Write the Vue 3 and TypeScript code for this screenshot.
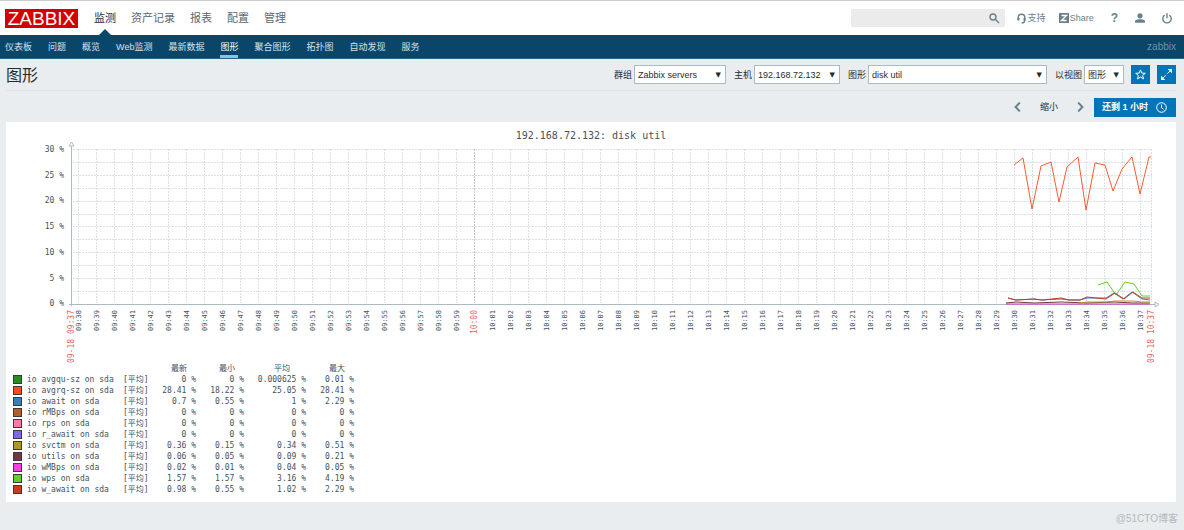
<script setup lang="ts">
interface Series { name: string; color: string; last: string; min: string; avg: string; max: string }
interface Tick { x: number; label: string; major: boolean }

const mainMenu: string[] = ['监测', '资产记录', '报表', '配置', '管理']
const subMenu: string[] = ['仪表板', '问题', '概览', 'Web监测', '最新数据', '图形', '聚合图形', '拓扑图', '自动发现', '服务']

const series: Series[] = [
  { name: 'io avgqu-sz on sda', color: '#2a8a26', last: '0 %', min: '0 %', avg: '0.000625 %', max: '0.01 %' },
  { name: 'io avgrq-sz on sda', color: '#fc4a1a', last: '28.41 %', min: '18.22 %', avg: '25.05 %', max: '28.41 %' },
  { name: 'io await on sda', color: '#3a80b4', last: '0.7 %', min: '0.55 %', avg: '1 %', max: '2.29 %' },
  { name: 'io rMBps on sda', color: '#b0602c', last: '0 %', min: '0 %', avg: '0 %', max: '0 %' },
  { name: 'io rps on sda', color: '#fc7aa8', last: '0 %', min: '0 %', avg: '0 %', max: '0 %' },
  { name: 'io r_await on sda', color: '#7e6ae4', last: '0 %', min: '0 %', avg: '0 %', max: '0 %' },
  { name: 'io svctm on sda', color: '#b49628', last: '0.36 %', min: '0.15 %', avg: '0.34 %', max: '0.51 %' },
  { name: 'io utils on sda', color: '#743440', last: '0.06 %', min: '0.05 %', avg: '0.09 %', max: '0.21 %' },
  { name: 'io wMBps on sda', color: '#f640e0', last: '0.02 %', min: '0.01 %', avg: '0.04 %', max: '0.05 %' },
  { name: 'io wps on sda', color: '#66cc2c', last: '1.57 %', min: '1.57 %', avg: '3.16 %', max: '4.19 %' },
  { name: 'io w_await on sda', color: '#c43e1c', last: '0.98 %', min: '0.55 %', avg: '1.02 %', max: '2.29 %' },
]

const pad = (n: number): string => String(n).padStart(2, '0')
const ticks: Tick[] = Array.from({ length: 60 }, (_, i) => {
  const minute = 9 * 60 + 38 + i
  return { x: 73 + i * 18, label: `${pad(Math.floor(minute / 60))}:${pad(minute % 60)}`, major: minute % 60 === 0 }
})
const rows: number[] = Array.from({ length: 12 }, (_, i) => Math.round(27 + i * 12.9))
const yLabels = [30, 25, 20, 15, 10, 5, 0].map((v, i) => ({ text: `${v} %`, y: Math.round(30 + i * 25.7) }))
</script>

<template>
  <div class="page">
    <header class="top">
      <a class="logo" href="#">ZABBIX</a>
      <nav class="main-menu">
        <a v-for="(m, i) in mainMenu" :key="m" href="#" :class="{ active: i === 0 }">{{ m }}</a>
      </nav>
      <div class="search">
        <input type="text" aria-label="搜索">
        <button type="button" aria-label="搜索">
          <svg width="11" height="11" viewBox="0 0 11 11"><circle cx="4" cy="4" r="3" /><path d="M6.3 6.3 10 10" /></svg>
        </button>
      </div>
      <a class="tool support" href="#">
        <svg width="9" height="11" viewBox="0 0 9 11"><path d="M1.2 7V4.6a3.3 3.3 0 0 1 6.6 0V7c0 1.9-.9 3-3.1 3" /><path d="M1.5 5v2.6M7.5 5v2.6" stroke-width="2" /></svg>支持
      </a>
      <a class="tool share" href="#">
        <svg width="10" height="10" viewBox="0 0 10 10"><path class="solid" d="M0 0h10v10H0z" /><path class="zed" d="M2.5 2.5h5l-5 5h5" /></svg>Share
      </a>
      <a class="tool help" href="#">?</a>
      <a class="tool user" href="#" aria-label="用户">
        <svg width="10" height="10" viewBox="0 0 10 10"><circle class="solid" cx="5" cy="2.8" r="2.6" /><path class="solid" d="M0 9.7V8.3C0 6.8 3 6.3 5 6.3s5 .5 5 2v1.4z" /></svg>
      </a>
      <a class="tool power" href="#" aria-label="退出">
        <svg width="10" height="11" viewBox="0 0 10 11"><path d="M2.7 2.2a4.2 4.2 0 1 0 4.6 0M5 .3v5" /></svg>
      </a>
    </header>

    <nav class="sub-menu">
      <a v-for="m in subMenu" :key="m" href="#" :class="{ selected: m === '图形' }">{{ m }}</a>
      <span class="server">zabbix</span>
    </nav>

    <main>
      <div class="title-row">
        <h1>图形</h1>
        <form class="filters" @submit.prevent>
          <label for="group">群组</label>
          <span class="pick group"><select id="group"><option>Zabbix servers</option></select></span>
          <label for="host">主机</label>
          <span class="pick host"><select id="host"><option>192.168.72.132</option></select></span>
          <label for="graph">图形</label>
          <span class="pick graph"><select id="graph"><option>disk util</option></select></span>
          <label for="view">以视图</label>
          <span class="pick view"><select id="view"><option>图形</option></select></span>
          <button class="square" type="button" aria-label="收藏">
            <svg width="11" height="11" viewBox="0 0 11 11"><path d="m5.5.9 1.3 3.2 3.5.2-2.7 2.2.9 3.4-3-1.9-3 1.9.9-3.4L.7 4.3l3.5-.2z" /></svg>
          </button>
          <button class="square" type="button" aria-label="全屏">
            <svg width="11" height="11" viewBox="0 0 11 11"><path d="m6.3 4.7 3-3M4.7 6.3l-3 3" /><path class="fill" d="M6.7 0H11v4.3zM0 6.7V11h4.3z" /></svg>
          </button>
        </form>
      </div>

      <div class="time-row">
        <button class="arrow" type="button" aria-label="向前"><svg width="7" height="10" viewBox="0 0 7 10"><path d="M5.8.6 1.6 5l4.2 4.4" /></svg></button>
        <button class="zoom" type="button">缩小</button>
        <button class="arrow" type="button" aria-label="向后"><svg width="7" height="10" viewBox="0 0 7 10"><path d="M1.2.6 5.4 5 1.2 9.4" /></svg></button>
        <button class="range" type="button">还剩 1 小时
          <svg width="11" height="11" viewBox="0 0 11 11"><circle cx="5.5" cy="5.5" r="4.8" /><path d="M5.5 2.5v3.2l2 1.6" /></svg>
        </button>
      </div>

      <section class="panel">
        <svg class="chart" viewBox="0 0 1170 241" role="img" aria-label="192.168.72.132: disk util">
          <text class="heading" x="585" y="17" text-anchor="middle">192.168.72.132: disk util</text>
          <g class="grid">
            <path v-for="y in rows" :key="y" :d="`M67 ${y}.5H1146`" />
            <path v-for="t in ticks" :key="t.x" :class="{ major: t.major }" :d="`M${t.x - 1}.5 27V181`" />
            <path d="M1145.5 27V181" />
          </g>
          <g class="axis">
            <path d="M65.5 24V184M63 182.5H1149" />
            <path class="tip" d="m63 24 2.5-4 2.5 4zM1149 180l4 2.5-4 2.5z" />
          </g>
          <text v-for="l in yLabels" :key="l.text" class="value" x="58" :y="l.y" text-anchor="end">{{ l.text }}</text>
          <text
            v-for="t in ticks" :key="t.label" :class="t.major ? 'date' : 'time'"
            :transform="`translate(${t.x + 2} 188) rotate(-90)`" text-anchor="end"
          >{{ t.label }}</text>
          <text class="date" transform="translate(68 188) rotate(-90)" text-anchor="end">09-18 09:37</text>
          <text class="date" transform="translate(1148 188) rotate(-90)" text-anchor="end">09-18 10:37</text>
          <g class="lines">
            <polyline stroke="#fc5a30" points="1008,43 1017,36 1026,87 1035,44 1045,40 1053,80 1061,45 1072,35 1080,88 1089,41 1099,43 1107,69 1116,47 1126,35 1134,72 1143,35 1145,35" />
            <polyline stroke="#743440" points="1000,181 1010,180 1028,181 1055,180 1081,181 1109,180 1127,181 1144,181" />
            <polyline stroke="#b49628" points="1073,181 1081,180 1100,180 1109,179 1127,179 1136,180 1144,180" />
            <polyline stroke="#e030d0" points="1000,182 1144,182" />
            <polyline stroke="#66cc2c" points="1092,163 1101,160 1110,173 1119,160 1128,162 1136,174 1144,174" />
            <polyline stroke="#3a80b4" points="1002,176 1010,178 1028,177 1036,178 1055,177 1063,178 1074,178 1081,176 1100,176 1108,171 1117,177 1126,170 1136,177 1144,178" />
            <polyline stroke="#c43e1c" points="1002,176 1010,178 1028,177 1036,178 1055,176 1063,178 1074,178 1081,175 1100,177 1109,171 1118,177 1127,170 1136,176 1144,176" />
          </g>
        </svg>

        <table class="legend">
          <thead>
            <tr><th class="name"></th><th class="fn"></th><th class="last">最新</th><th class="min">最小</th><th class="avg">平均</th><th class="max">最大</th></tr>
          </thead>
          <tbody>
            <tr v-for="s in series" :key="s.name">
              <td><span class="swatch" :style="{ background: s.color }"></span>{{ s.name }}</td>
              <td>[平均]</td>
              <td class="num">{{ s.last }}</td>
              <td class="num">{{ s.min }}</td>
              <td class="num">{{ s.avg }}</td>
              <td class="num">{{ s.max }}</td>
            </tr>
          </tbody>
        </table>
      </section>
    </main>
    <footer>@51CTO博客</footer>
  </div>
</template>

<style>
html { background: #e9edf0; }
</style>

<style scoped>
* { box-sizing: border-box; }
.page { font: 9px/12px "Liberation Sans", "Noto Sans CJK SC", sans-serif; color: #1f2c33; }
a { text-decoration: none; color: inherit; }
button { font: inherit; border: 0; padding: 0; background: none; color: inherit; cursor: pointer; }
svg { fill: none; display: block; }

.top { display: flex; align-items: center; height: 35px; padding: 0 12px 0 5px; background: #fff; border-top: 1px solid #ccc; color: #69808d; }
.logo { width: 73px; height: 19px; background: #d40000; color: #fff; font-size: 19px; line-height: 20px; text-align: center; }
.main-menu { display: flex; gap: 15px; margin-left: 16px; margin-right: auto; font-size: 11px; line-height: 34px; color: #5a686f; }
.main-menu .active { position: relative; color: #1f2c33; }
.main-menu .active::after { content: ""; position: absolute; left: 5px; bottom: 0; border: 6px solid transparent; border-top: 0; border-bottom-color: #0a466a; }
.search { display: flex; align-items: center; width: 154px; height: 18px; background: #ebebeb; padding-right: 5px; }
.search input { flex: 1; min-width: 0; height: 100%; border: 0; background: none; font: inherit; outline: 0; padding: 0 4px; }
.top svg { stroke: #69808d; stroke-width: 1.4; }
.tool { display: flex; align-items: center; gap: 2px; }
.top .solid { fill: #69808d; stroke: none; }
.top .zed { stroke: #fff; }
.support { margin-left: 12px; }
.share { margin-left: 13px; gap: 1px; }
.help { margin-left: 17px; font-size: 12px; font-weight: bold; }
.user { margin-left: 17px; }
.power { margin-left: 17px; }

.sub-menu { display: flex; gap: 16px; height: 24px; padding: 0 8px 0 5px; background: #0a466a; border-bottom: 1px solid #2b6488; color: #d4e2ea; }
.sub-menu a { line-height: 24px; }
.sub-menu .selected { color: #fff; box-shadow: inset 0 -3px #7dc6f2; }
.server { margin-left: auto; line-height: 24px; font-size: 10px; color: #6f93a8; }

main { padding: 0 8px 0 6px; }
.title-row { display: flex; align-items: center; justify-content: space-between; height: 32px; border-bottom: 1px solid #dfe4e7; }
h1 { margin: 0; font-size: 16px; line-height: 24px; padding-top: 2px; font-weight: normal; }
.filters { display: flex; align-items: center; }
label { margin-left: 8px; margin-right: 2px; }
.pick { position: relative; height: 19px; }
.pick::after { content: "▼"; position: absolute; right: 5px; top: 5px; font: 7px/10px "DejaVu Sans", sans-serif; pointer-events: none; }
select { display: block; appearance: none; width: 100%; height: 100%; border: 1px solid #acbbc2; border-radius: 0; background: #fff; color: #1f2c33; font: inherit; padding: 0 3px; }
.group { width: 92px; }
.host { width: 86px; }
.graph { width: 179px; }
.view { width: 40px; }
.square { display: flex; align-items: center; justify-content: center; width: 19px; height: 19px; margin-left: 7px; background: #0275b8; }
.square svg, .range svg { stroke: #fff; stroke-width: 1; }
.square .fill { fill: #fff; stroke: none; }

.time-row { display: flex; align-items: center; justify-content: flex-end; height: 31px; padding-top: 1px; }
.arrow svg { stroke: #69808d; stroke-width: 2; }
.zoom { margin: 0 19px; }
.range { display: flex; align-items: center; gap: 8px; height: 19px; padding: 0 9px 0 8px; margin-left: 10px; background: #0275b8; color: #fff; font-weight: bold; }

.panel { background: #fff; padding-bottom: 7px; }
.chart { width: 100%; height: auto; }
.chart text, .legend { font-family: "DejaVu Sans Mono", "Noto Sans CJK SC", monospace; }
.chart text { fill: #45525a; font-size: 8px; }
.chart .heading { font-size: 10px; }
.chart .time { font-size: 7px; }
.chart .date { fill: #ee5e5c; }
.grid path { stroke: #dbe1e4; stroke-dasharray: 2 1; }
.grid .major { stroke: #bcc8ce; }
.axis { stroke: #acbbc2; }
.axis .tip { fill: #fff; }
.lines { stroke-width: 1; stroke-linejoin: round; }

.legend { table-layout: fixed; width: 348px; border-collapse: collapse; color: #45525a; font-size: 8px; line-height: 11px; }
.legend th, .legend td { padding: 0; height: 11px; font-weight: normal; text-align: left; white-space: nowrap; }
.legend td:first-child { padding-left: 7px; }
.legend .num { text-align: right; }
.legend th:nth-child(n + 3) { text-align: right; padding-right: 9px; }
.legend .avg { padding-right: 16px; }
.legend th.avg:nth-child(5) { padding-right: 16px; }
.name { width: 117px; }
.fn { width: 27px; }
.last { width: 46px; }
.min { width: 48px; }
.avg { width: 62px; }
.max { width: 48px; }
.swatch { display: inline-block; width: 9px; height: 9px; margin-right: 5px; border: 1px solid #3a3a3a; vertical-align: -2px; }
footer { padding: 10px 6px 0 0; text-align: right; font-size: 10px; line-height: 14px; color: #b4b8bb; }
</style>
